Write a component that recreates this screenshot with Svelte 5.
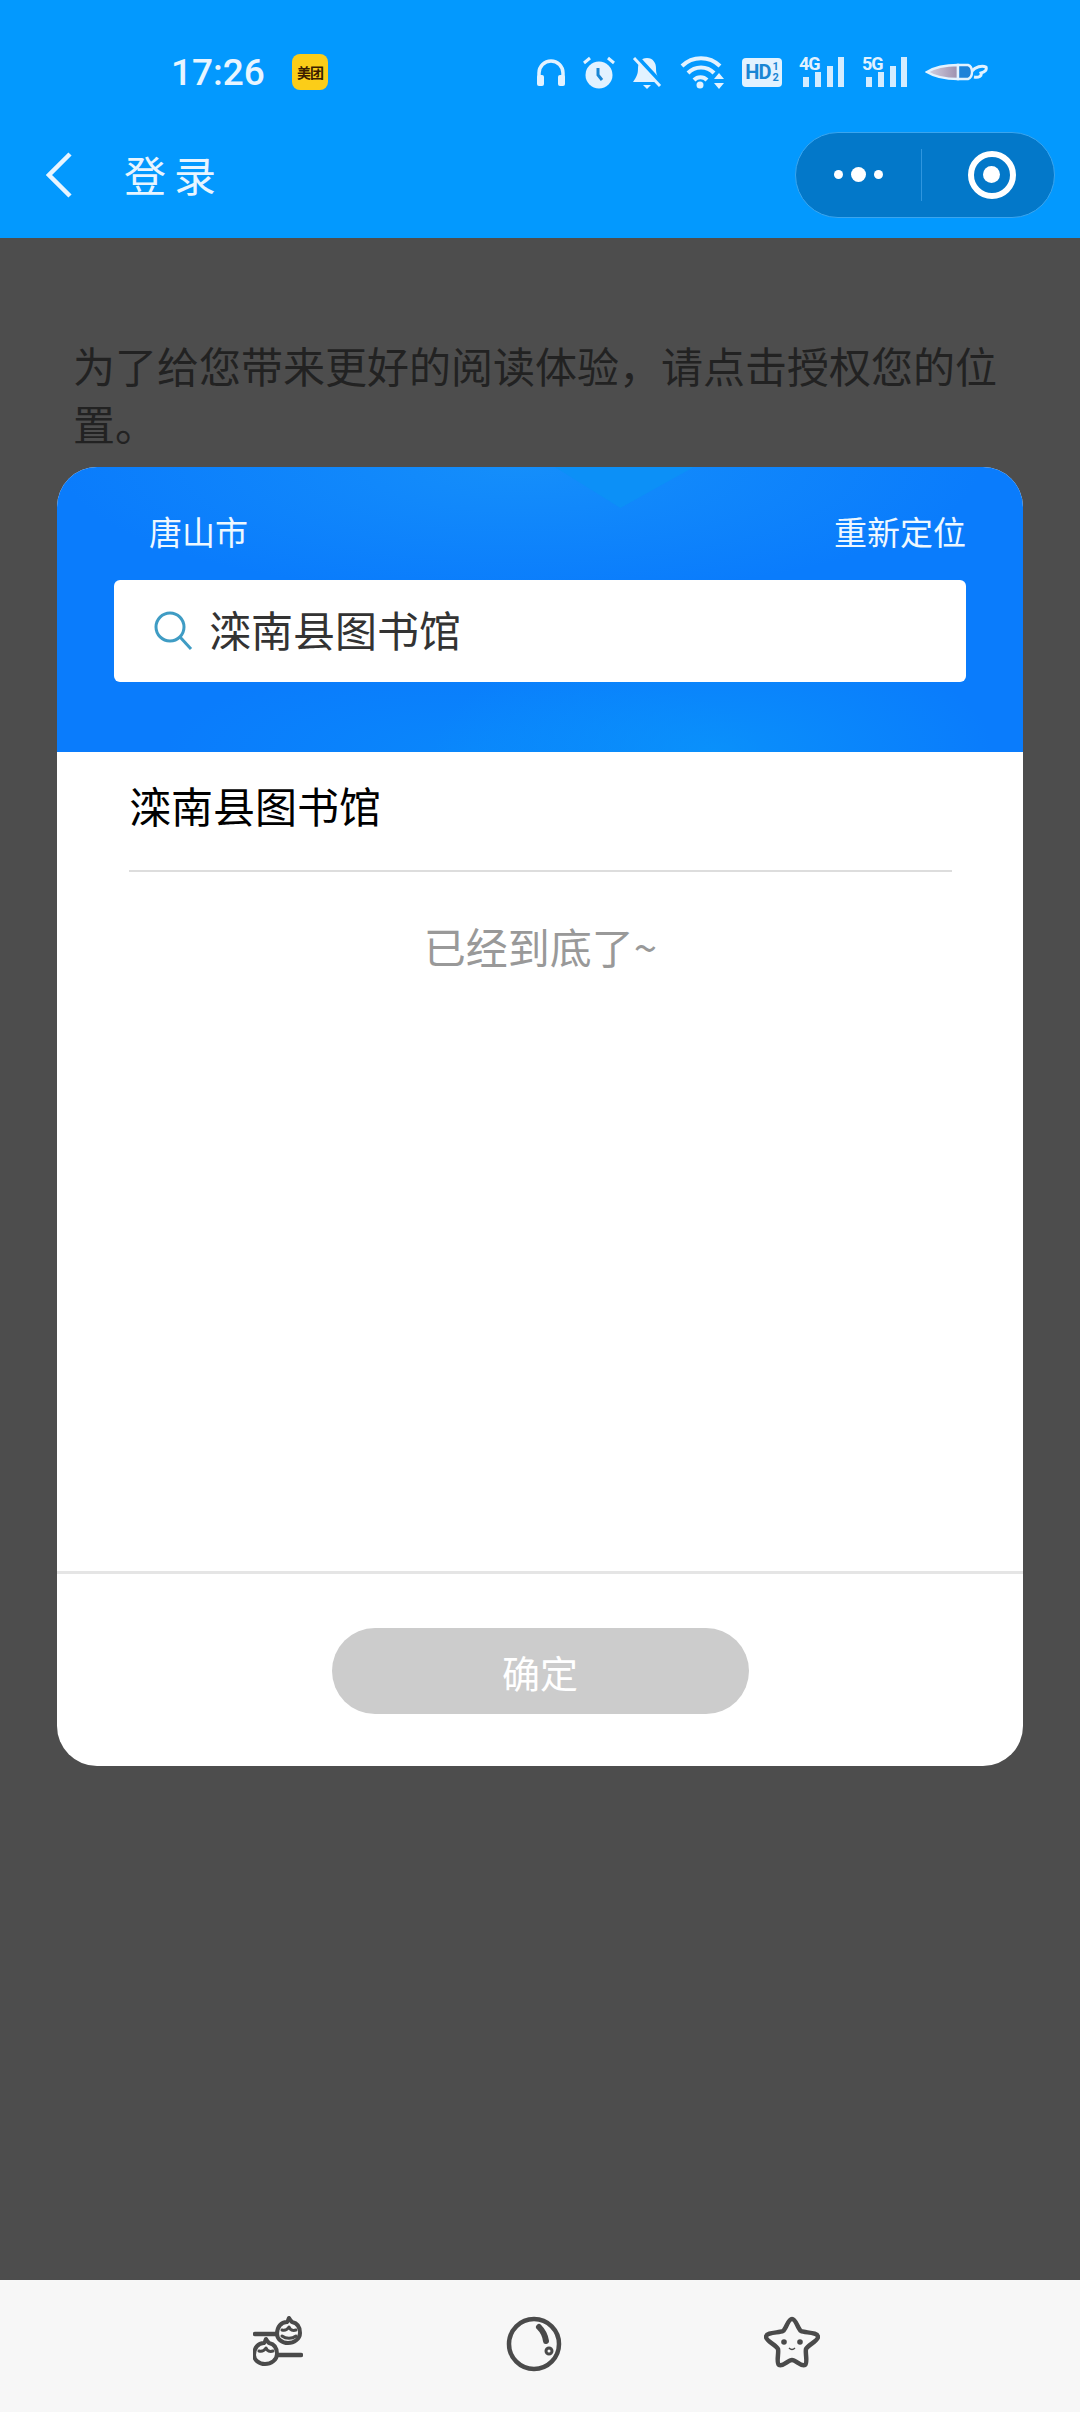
<script>
  const toolbar = ['spoons', 'bubble', 'star'];
</script>

<div class="page">
  <header class="top">
    <div class="status">
      <div class="status-left">
        <span class="time">17:26</span>
        <span class="app-badge">美团</span>
      </div>
      <div class="status-right">
        <svg width="30" height="28" viewBox="0 0 30 28" fill="none"><path d="M3 20V15a12 12 0 0 1 24 0v5" stroke="#e2f2ff" stroke-width="3.5"/><rect x="1" y="17" width="7" height="11" rx="2" fill="#e2f2ff"/><rect x="22" y="17" width="7" height="11" rx="2" fill="#e2f2ff"/></svg>
        <svg width="32" height="33" viewBox="0 0 32 33" fill="none"><circle cx="16" cy="19" r="13.5" fill="#e2f2ff"/><path d="M15 12v7l4 5" stroke="#1a86d4" stroke-width="3"/><path d="M1 7l6-5M31 7l-6-5" stroke="#e2f2ff" stroke-width="3"/></svg>
        <svg width="31" height="33" viewBox="0 0 31 33" fill="none"><path d="M15 2c-6 0-9 5-9 10 0 6-1 8-5 14h28c-4-6-5-8-5-14 0-5-3-10-9-10z" fill="#e2f2ff"/><path d="M11 29h8l-4 4z" fill="#e2f2ff"/><path d="M4 1l26 28" stroke="#0399fe" stroke-width="6"/><path d="M2 2l26 28" stroke="#e2f2ff" stroke-width="3"/></svg>
        <svg width="45" height="34" viewBox="0 0 45 34" fill="none"><path d="M2 11a27 27 0 0 1 38 0M8 18a18 18 0 0 1 26 0M14 25a9 9 0 0 1 13 0" stroke="#e2f2ff" stroke-width="4"/><circle cx="20" cy="30" r="3.5" fill="#e2f2ff"/><path d="M39 18l5 6H34zM39 34l5-6H34z" fill="#e2f2ff"/></svg>
        <span class="hd">HD<span class="hd-frac">1<br />2</span></span>
        {#each ['4G', '5G'] as net}
          <span class="signal">
            <i class="net">{net}</i>
            <svg width="46" height="30" viewBox="0 0 46 30" fill="#d4ecff"><rect x="4" y="20" width="6" height="10"/><rect x="16" y="15" width="6" height="15"/><rect x="28" y="9" width="6" height="21"/><rect x="39" y="0" width="6" height="30"/></svg>
          </span>
        {/each}
        <svg width="63" height="18" viewBox="0 0 63 18" fill="none"><defs><linearGradient id="charge" x1="0" x2="1"><stop offset="0" stop-color="#d6d3e2"/><stop offset="1" stop-color="#9c8fae"/></linearGradient></defs><path d="M2 9C10 4 22 2 33 2v14C22 16 10 14 2 9z" fill="url(#charge)" stroke="#e2f2ff" stroke-width="2.4"/><path d="M33 2h10c3 1 4 3 4 7s-1 6-4 7H33z" fill="#1f82d8" stroke="#e2f2ff" stroke-width="2.4"/><path d="M47 8c3-4 10-6 14-4 1 3-1 5-5 6 1 3-2 5-7 4" stroke="#e2f2ff" stroke-width="3"/></svg>
      </div>
    </div>
    <div class="nav">
      <svg class="back" width="26" height="46" viewBox="0 0 26 46" fill="none"><path d="M24 2L3 23l21 21" stroke="#e8f5ff" stroke-width="4.5"/></svg>
      <span class="title">登录</span>
      <div class="capsule">
        <div class="capsule-half">
          <i class="dot"></i><i class="dot big"></i><i class="dot"></i>
        </div>
        <div class="capsule-half">
          <span class="target"></span>
        </div>
      </div>
    </div>
  </header>

  <main class="dim">
    <p class="notice">为了给您带来更好的阅读体验，请点击授权您的位置。</p>

    <section class="modal">
      <div class="hero">
        <div class="hero-row">
          <span class="city">唐山市</span>
          <span class="relocate">重新定位</span>
        </div>
        <div class="search">
          <svg width="40" height="40" viewBox="0 0 40 40" fill="none"><circle cx="17" cy="16" r="14" stroke="#3f9cc4" stroke-width="3"/><path d="M27 26l11 12" stroke="#3f9cc4" stroke-width="3"/></svg>
          <span class="query">滦南县图书馆</span>
        </div>
      </div>
      <div class="list">
        <div class="list-item">滦南县图书馆</div>
        <div class="list-end">已经到底了~</div>
      </div>
      <div class="foot">
        <button class="confirm" type="button">确定</button>
      </div>
    </section>
  </main>

  <nav class="tabs">
    {#each toolbar as name}
      <span class="tab {name}">
        {#if name === 'spoons'}
          <svg width="50" height="52" viewBox="0 0 50 52" fill="none" stroke="#4a4a4a" stroke-width="4" stroke-linecap="round" stroke-linejoin="round">
            <path d="M2 18h22M26 39h22" stroke-width="4.5"/>
            <path d="M36 2c-1 2-1 3-2 4-6 0-10 5-10 12 0 5 5 9 11 9s12-4 12-10c0-6-3-10-8-11-1-1-2-2-3-4z"/>
            <path d="M29 14c3 1 5 0 7-3 1 3 4 4 7 3M29 20c4 3 10 3 14 0" stroke-width="3"/>
            <path d="M13 23c-1 2-1 3-2 4-6 0-10 5-10 12 0 5 5 9 11 9s12-4 12-10c0-6-3-10-8-11-1-1-2-2-3-4z"/>
            <path d="M6 35c3 1 5 0 7-3 1 3 4 4 7 3" stroke-width="3"/>
          </svg>
        {:else if name === 'bubble'}
          <svg width="56" height="56" viewBox="0 0 56 56" fill="none" stroke="#4a4a4a" stroke-width="4.5">
            <circle cx="28" cy="28" r="25"/>
            <path d="M33 11c3 3 6 7 7 14" stroke-width="6" stroke-linecap="round"/>
            <circle cx="43" cy="35" r="3" stroke-width="3"/>
          </svg>
        {:else}
          <svg width="56" height="52" viewBox="0 0 56 52" fill="none" stroke="#4a4a4a" stroke-width="4.5" stroke-linejoin="round">
            <path d="M28 3c4 0 6 10 9 12 4 2 17 1 17 6 0 4-10 8-12 12-1 4 2 14-1 16-4 2-9-5-13-5s-9 7-13 5c-3-2 0-12-1-16C12 29 2 25 2 21c0-5 13-4 17-6 3-2 5-12 9-12z"/>
            <circle cx="20" cy="26" r="2.8" fill="#4a4a4a" stroke="none"/>
            <circle cx="36" cy="26" r="2.8" fill="#4a4a4a" stroke="none"/>
            <path d="M25 32c2 2 4 2 6 0" stroke-width="1.4"/>
          </svg>
        {/if}
      </span>
    {/each}
  </nav>
</div>

<style>
  :global(body) {
    margin: 0;
    font-family: "Noto Sans CJK SC", "Noto Sans", sans-serif;
  }

  .page {
    width: 1080px;
    height: 2412px;
    display: flex;
    flex-direction: column;
    overflow: hidden;
  }

  .top {
    height: 238px;
    flex: none;
    background: #0399fe;
    color: #e8f5ff;
  }

  .status {
    height: 132px;
    padding: 52px 92px 0 171px;
    box-sizing: border-box;
    display: flex;
    justify-content: space-between;
    align-items: flex-start;
  }

  .status-left {
    display: flex;
    align-items: center;
    gap: 28px;
    height: 40px;
  }

  .time {
    font-family: Roboto, sans-serif;
    font-size: 37px;
    font-weight: 500;
    width: 93px;
  }

  .app-badge {
    width: 36px;
    height: 36px;
    border-radius: 8px;
    background: #fbcd18;
    color: #3a1d00;
    font-size: 14px;
    font-weight: 700;
    line-height: 36px;
    text-align: center;
    white-space: nowrap;
    letter-spacing: -1px;
  }

  .status-right {
    display: flex;
    align-items: center;
    gap: 17px;
    height: 40px;
  }

  .hd {
    width: 40px;
    height: 29px;
    background: #e2f2ff;
    border-radius: 4px;
    color: #1a86d4;
    font-family: Roboto, sans-serif;
    font-size: 20px;
    font-weight: 700;
    letter-spacing: -1px;
    display: flex;
    align-items: center;
    justify-content: center;
    line-height: 1;
  }

  .hd-frac {
    font-size: 11px;
    line-height: 11px;
    text-align: center;
    letter-spacing: 0;
    margin-left: 2px;
  }

  .signal {
    position: relative;
    display: block;
    width: 46px;
    height: 30px;
  }

  .signal svg {
    display: block;
  }

  .net {
    position: absolute;
    left: 0;
    top: -1px;
    color: #e2f2ff;
    font-family: Roboto, sans-serif;
    font-size: 18px;
    font-weight: 700;
    font-style: normal;
    letter-spacing: -1px;
    line-height: 16px;
  }

  .nav {
    height: 106px;
    display: flex;
    align-items: center;
    padding: 0 25px 0 46px;
  }

  .back {
    margin-top: -21px;
  }

  .title {
    margin: -24px 0 0 52px;
    font-size: 42px;
    letter-spacing: 8px;
    flex: 1;
  }

  .capsule {
    width: 260px;
    height: 86px;
    margin-top: -21px;
    border-radius: 43px;
    border: 1px solid #3ba5ee;
    background: #0378c9;
    box-sizing: border-box;
    display: flex;
    align-items: center;
  }

  .capsule-half {
    flex: 1;
    height: 52px;
    display: flex;
    align-items: center;
    justify-content: center;
    gap: 8px;
  }

  .capsule-half:first-child {
    border-right: 1px solid #2f96df;
  }

  .capsule-half:last-child {
    padding-left: 7px;
  }

  .dot {
    width: 9px;
    height: 9px;
    border-radius: 50%;
    background: #fff;
  }

  .dot.big {
    width: 15px;
    height: 15px;
  }

  .target {
    width: 48px;
    height: 48px;
    box-sizing: border-box;
    border: 6px solid #fff;
    border-radius: 50%;
    display: flex;
    align-items: center;
    justify-content: center;
  }

  .target::after {
    content: "";
    width: 17px;
    height: 17px;
    border-radius: 50%;
    background: #fff;
  }

  .dim {
    flex: 1;
    background: #4d4d4d;
    padding: 98px 57px 0;
  }

  .notice {
    margin: 0 0 15px 16px;
    width: 930px;
    font-size: 42px;
    line-height: 58px;
    color: #222;
  }

  .modal {
    height: 1299px;
    border-radius: 40px;
    background: #fff;
    overflow: hidden;
    display: flex;
    flex-direction: column;
  }

  .hero {
    height: 285px;
    flex: none;
    box-sizing: border-box;
    padding: 40px 57px 0;
    color: #fff;
    position: relative;
    background:
      radial-gradient(ellipse 280px 120px at 68% 100%, rgba(10, 160, 250, .55), transparent),
      radial-gradient(ellipse 300px 90px at 42% 100%, rgba(10, 150, 250, .4), transparent),
      radial-gradient(ellipse 460px 130px at 48% 0%, rgba(25, 150, 250, .7), transparent),
      #0a7cfc;
  }

  /* faint facet at the top edge of the banner artwork */
  .hero::before {
    content: "";
    position: absolute;
    left: 498px;
    top: 0;
    width: 139px;
    height: 41px;
    background: #0c90f7;
    clip-path: polygon(0 0, 100% 0, 47% 100%);
  }

  .hero-row {
    position: relative;
    display: flex;
    justify-content: space-between;
    padding-left: 35px;
    font-size: 33px;
    line-height: 48px;
    color: #eef8ff;
  }

  .search {
    position: relative;
    margin-top: 25px;
    height: 102px;
    background: #fff;
    border-radius: 6px;
    display: flex;
    align-items: center;
    gap: 17px;
    padding-left: 39px;
    font-size: 42px;
    color: #333;
  }

  .query {
    margin: -5px 0 0 -1px;
  }

  .list {
    flex: 1;
    padding: 0 71px 0 72px;
  }

  .list-item {
    height: 120px;
    box-sizing: border-box;
    border-bottom: 2px solid #ddd;
    line-height: 106px;
    font-size: 42px;
    color: #000;
  }

  .list-end {
    margin-top: 43px;
    text-align: center;
    font-size: 42px;
    line-height: 62px;
    color: #999;
  }

  .foot {
    height: 195px;
    flex: none;
    box-sizing: border-box;
    border-top: 3px solid #e5e5e5;
    padding-top: 54px;
    display: flex;
    justify-content: center;
    align-items: flex-start;
  }

  .confirm {
    width: 417px;
    height: 86px;
    border: none;
    border-radius: 43px;
    background: #ccc;
    color: #fff;
    font-family: inherit;
    font-size: 38px;
  }

  .tabs {
    height: 132px;
    flex: none;
    background: #f7f7f7;
    display: flex;
    justify-content: center;
    align-items: center;
    gap: 200px;
    padding: 0 10px 8px 0;
    box-sizing: border-box;
  }

  .tab {
    display: flex;
    width: 56px;
    justify-content: center;
  }

  .bubble {
    margin-top: 4px;
  }

  .star {
    margin-left: 2px;
  }
</style>
